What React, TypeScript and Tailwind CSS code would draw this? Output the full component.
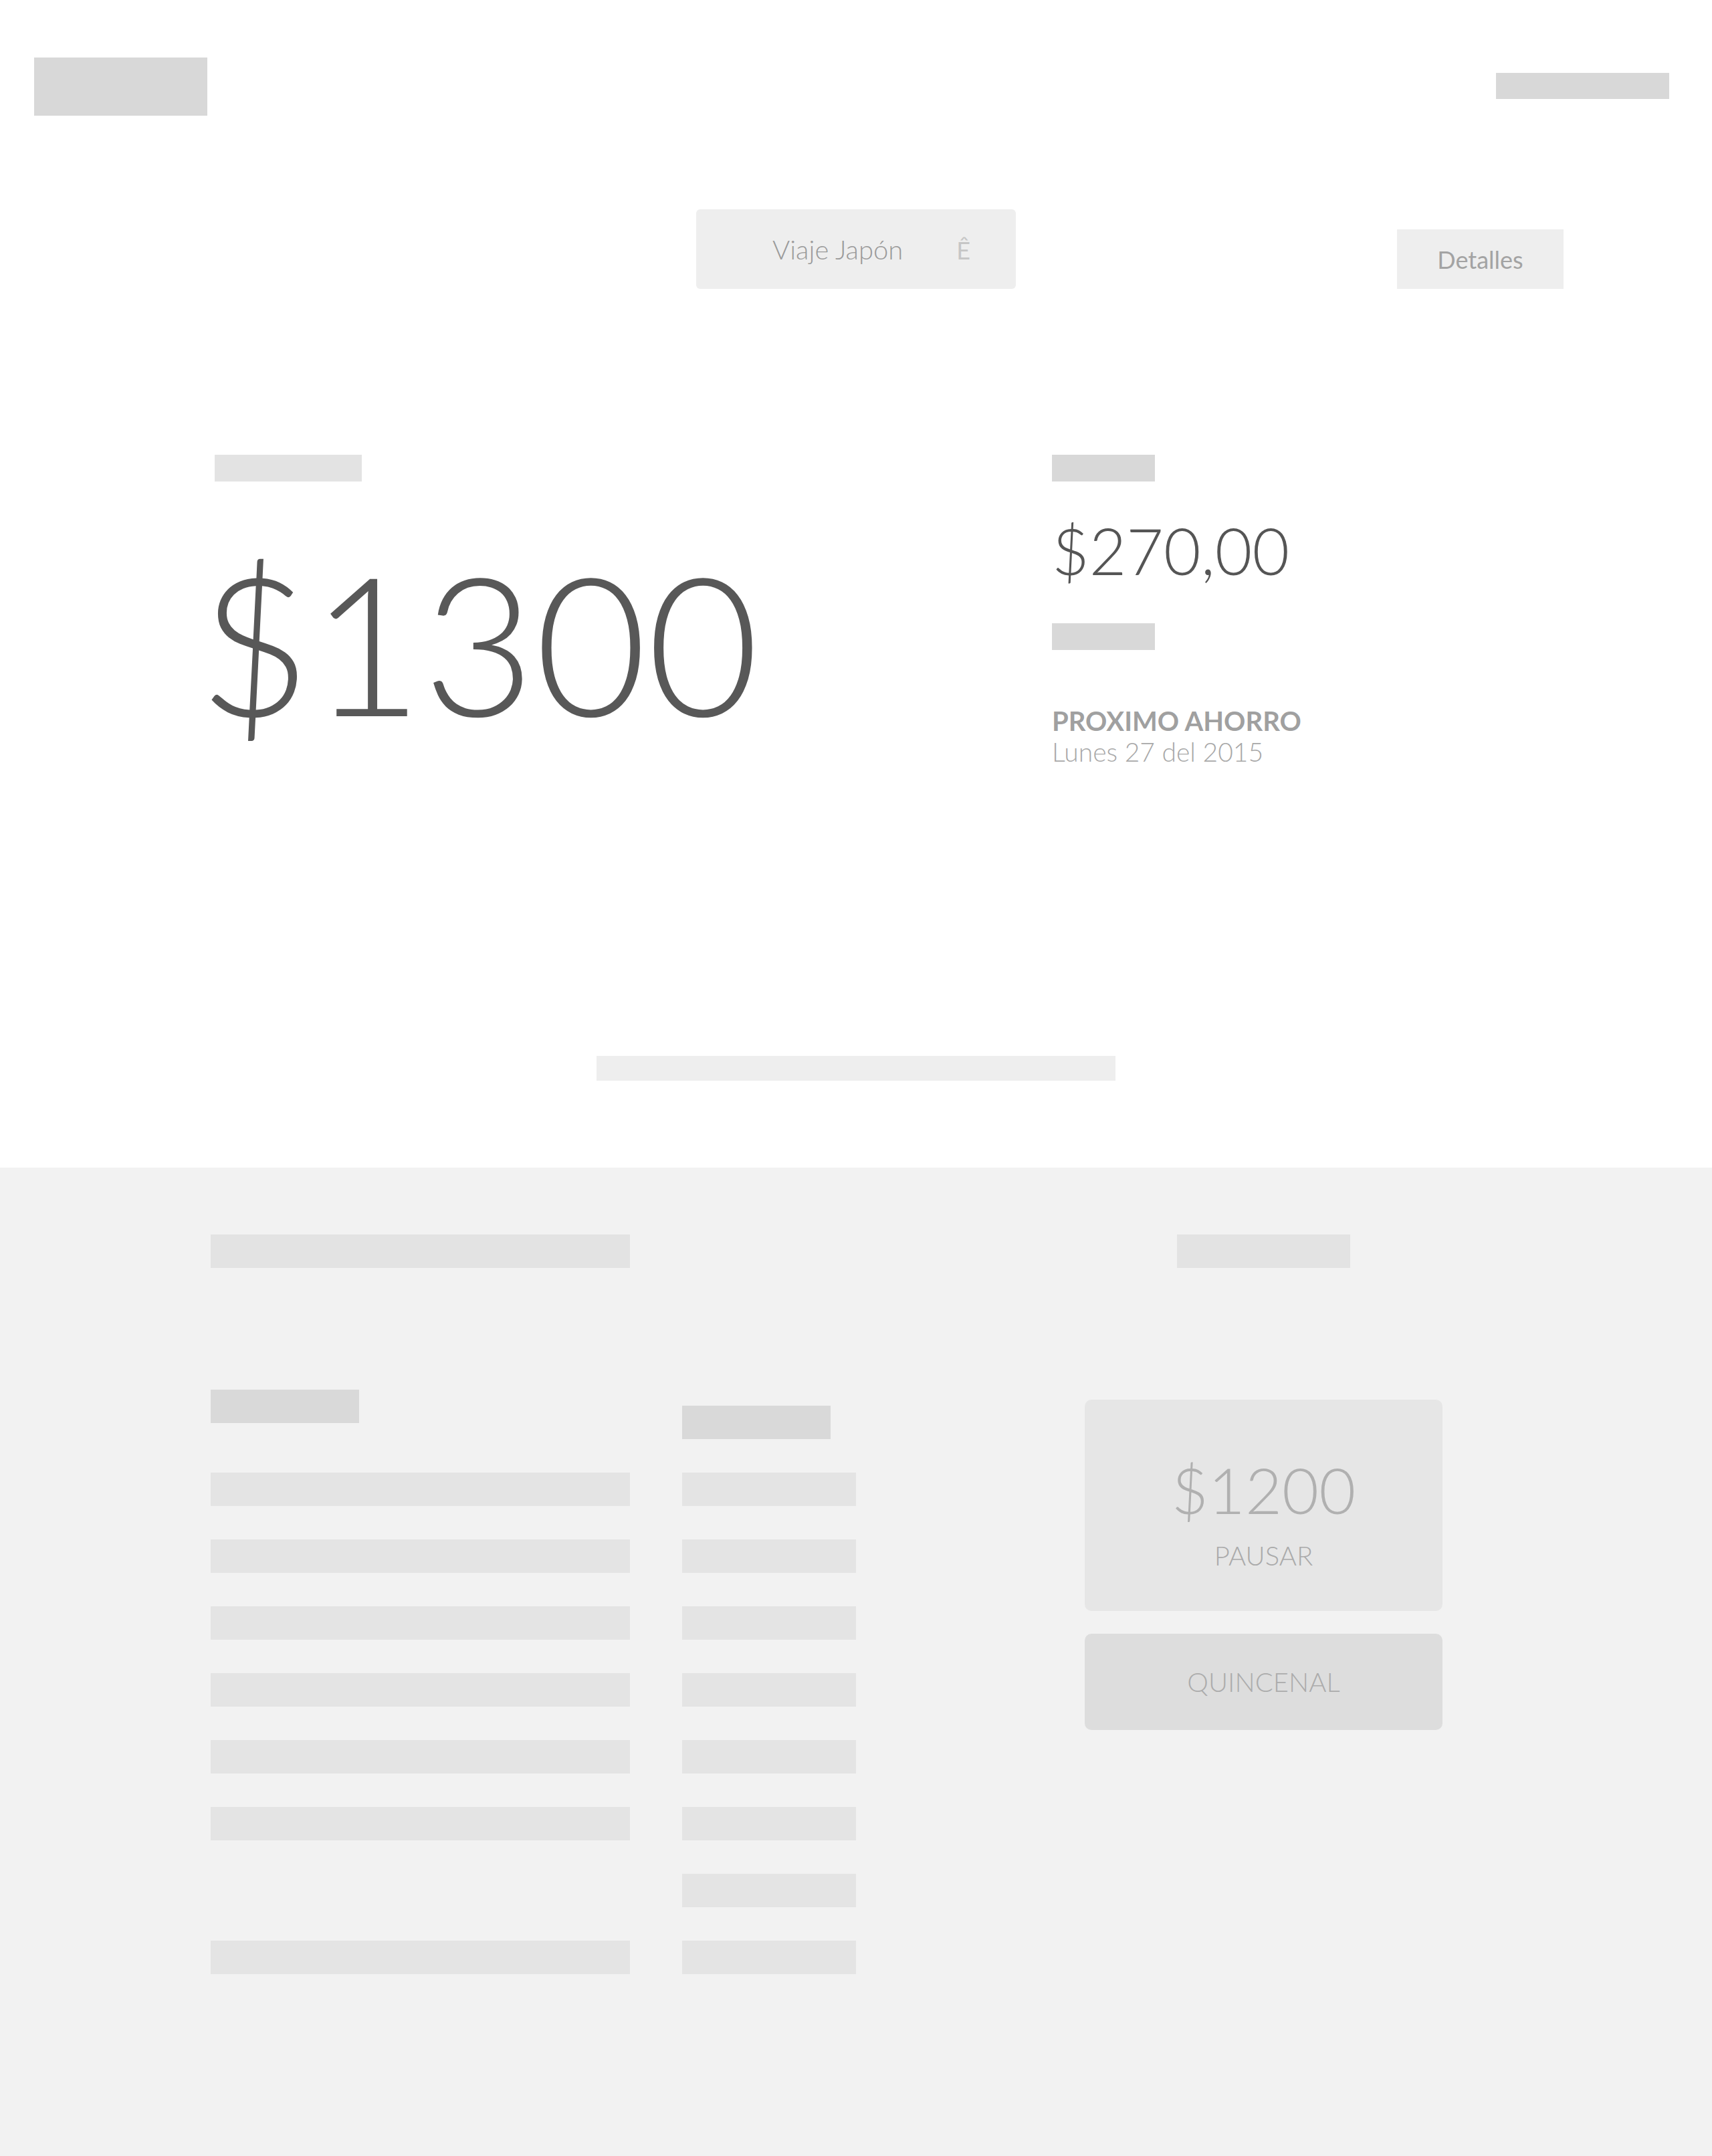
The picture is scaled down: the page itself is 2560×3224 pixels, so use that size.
const leftRows = [true, true, true, true, true, true, false, true];

function Bar({ className }: { className: string }) {
  return <div className={className} />;
}

export default function App() {
  return (
    <div className="w-full font-['Lato',sans-serif]">
      {/* top / white */}
      <section className="h-[1746px] bg-white flex flex-col">
        <header className="flex justify-between items-start pt-[86px] pl-[51px] pr-[64px]">
          <Bar className="w-[259px] h-[87px] bg-[#d8d8d8]" />
          <Bar className="mt-[23px] w-[259px] h-[39px] bg-[#d8d8d8]" />
        </header>

        <div className="mt-[140px] grid grid-cols-[1fr_478px_1fr] items-end">
          <div />
          <div className="h-[119px] rounded-md bg-[#eeeeee] flex items-center pl-[114px]">
            <span className="text-[40px] leading-none font-light text-[#9a9a9a]">Viaje Japón</span>
            <span className="ml-[80px] mt-[2px] text-[36px] leading-none text-[#c6c6c6]">Ê</span>
          </div>
          <div className="flex justify-end pr-[222px]">
            <button className="w-[249px] h-[89px] bg-[#eeeeee] text-[36px] leading-none text-[#a3a3a3]">
              Detalles
            </button>
          </div>
        </div>

        <div className="mt-[248px] h-[899px] flex pl-[321px]">
          <div className="w-[1252px] flex flex-col">
            <Bar className="w-[220px] h-[40px] bg-[#e3e3e3]" />
            <div className="mt-[95px] -ml-[24px] text-[289px] leading-none font-light text-[#585858]">$1300</div>
          </div>
          <div className="flex flex-col">
            <Bar className="w-[154px] h-[40px] bg-[#d8d8d8]" />
            <div className="mt-[55px] text-[96px] leading-none font-light text-[#555555]">$270,00</div>
            <Bar className="mt-[61px] w-[154px] h-[40px] bg-[#d8d8d8]" />
            <div className="mt-[86px] text-[40px] leading-none font-bold text-[#a0a0a0]">PROXIMO AHORRO</div>
            <div className="mt-[7px] text-[39px] leading-none font-light text-[#a8a8a8]">Lunes 27 del 2015</div>
          </div>
        </div>

        <Bar className="mx-auto w-[776px] h-[37px] bg-[#eeeeee]" />
      </section>

      {/* bottom / gray */}
      <section className="h-[1478px] bg-[#f2f2f2] flex pl-[315px] pt-[100px]">
        <div className="w-[965px] flex flex-col">
          <Bar className="w-[627px] h-[50px] bg-[#e3e3e3]" />
          <div className="mt-[182px] flex">
            <div className="w-[627px] flex flex-col">
              <Bar className="w-[222px] h-[50px] bg-[#d9d9d9]" />
              <div className="mt-[74px] flex flex-col gap-[50px]">
                {leftRows.map((on, i) =>
                  on ? (
                    <Bar key={i} className="w-[627px] h-[50px] bg-[#e4e4e4]" />
                  ) : (
                    <div key={i} className="h-[50px]" />
                  )
                )}
              </div>
            </div>
            <div className="ml-[78px] w-[260px] flex flex-col pt-[24px]">
              <Bar className="w-[222px] h-[50px] bg-[#d9d9d9]" />
              <div className="mt-[50px] flex flex-col gap-[50px]">
                {leftRows.map((_, i) => (
                  <Bar key={i} className="w-[260px] h-[50px] bg-[#e4e4e4]" />
                ))}
              </div>
            </div>
          </div>
        </div>

        <div className="ml-[342px] w-[535px] flex flex-col">
          <Bar className="mx-auto w-[259px] h-[50px] bg-[#e3e3e3]" />
          <div className="mt-[197px] h-[316px] rounded-[10px] bg-[#e6e6e6] flex flex-col items-center pt-[87px]">
            <div className="text-[95px] leading-none font-light text-[#b0b0b0]">$1200</div>
            <div className="mt-[31px] text-[40px] leading-none font-light text-[#aaaaaa]">PAUSAR</div>
          </div>
          <div className="mt-[34px] h-[144px] rounded-[10px] bg-[#dddddd] flex items-center justify-center">
            <span className="text-[40px] leading-none font-light text-[#acacac]">QUINCENAL</span>
          </div>
        </div>
      </section>
    </div>
  );
}
